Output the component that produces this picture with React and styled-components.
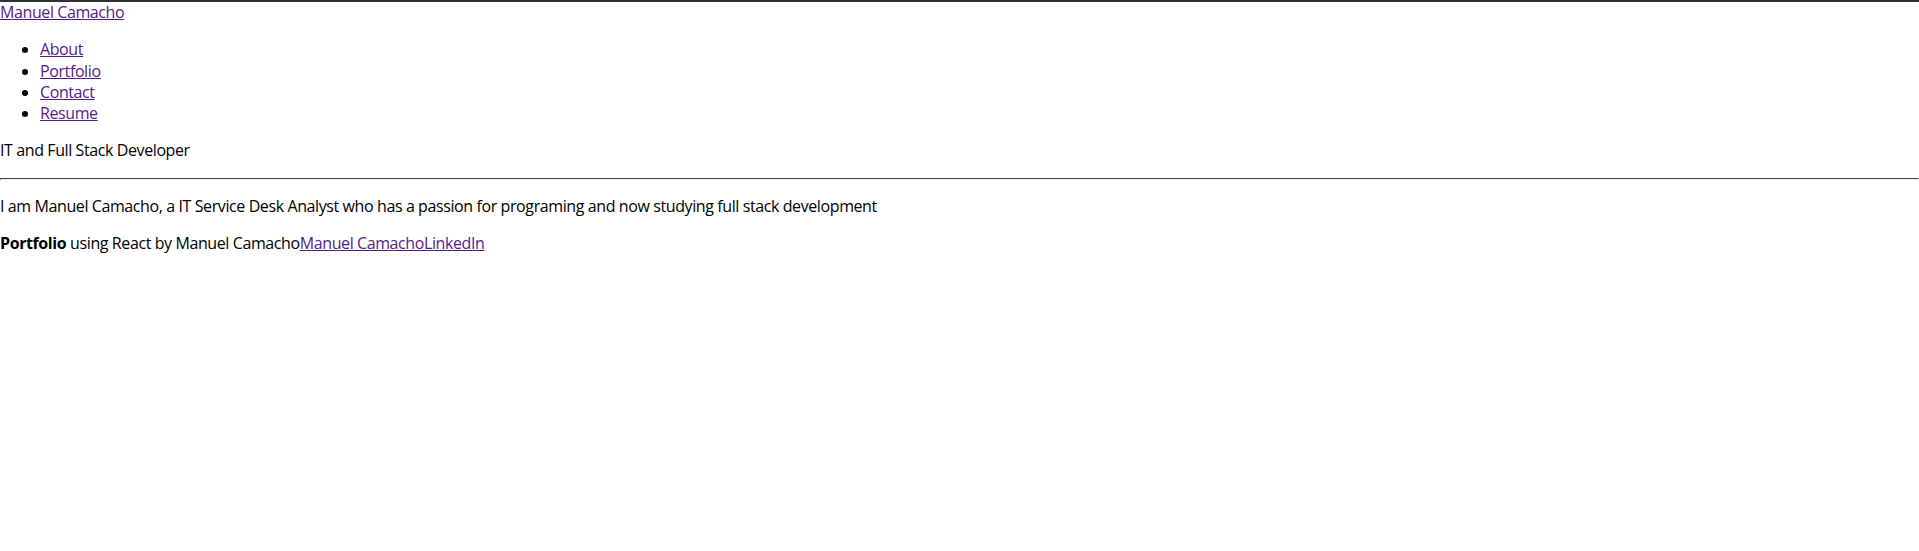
import React from 'react';
import styled, { createGlobalStyle } from 'styled-components';

const GlobalStyle = createGlobalStyle`
  html, body {
    margin: 0;
    padding: 0;
    background: #ffffff;
  }
  body {
    border-top: 2px solid #2f3038;
    font-family: "Open Sans", "Noto Sans", sans-serif;
    font-size: 16px;
    line-height: 1.33;
    letter-spacing: -0.4px;
    color: #000000;
  }
`;

const Header = styled.header`
  display: block;
`;

const Brand = styled.a`
  color: #551a8b;
  text-decoration: underline;
`;

const NavList = styled.ul`
  margin: 16px 0;
  padding-left: 40px;
  list-style: disc;
`;

const NavItem = styled.li`
  display: list-item;
`;

const NavLink = styled.a`
  color: #551a8b;
  text-decoration: underline;
`;

const Tagline = styled.p`
  margin: 16px 0;
`;

const Divider = styled.hr`
  margin: 8px 0;
  border: 1px inset #eeeeee;
  border-top-color: #9a9a9a;
  border-left-color: #9a9a9a;
`;

const Text = styled.p`
  margin: 16px 0;
`;

const FooterText = styled.p`
  margin: 16px 0;
`;

const FooterLink = styled.a`
  color: #551a8b;
  text-decoration: underline;
`;

const navItems = ['About', 'Portfolio', 'Contact', 'Resume'];

const App = () => {
  return (
    <>
      <GlobalStyle />
      <Header>
        <Brand href="#">Manuel Camacho</Brand>
        <NavList>
          {navItems.map((item) => (
            <NavItem key={item}>
              <NavLink href={`#${item.toLowerCase()}`}>{item}</NavLink>
            </NavItem>
          ))}
        </NavList>
        <Tagline>IT and Full Stack Developer</Tagline>
      </Header>
      <Divider />
      <main>
        <Text>
          I am Manuel Camacho, a IT Service Desk Analyst who has a passion for programing and now studying full
          stack development
        </Text>
      </main>
      <footer>
        <FooterText>
          <strong>Portfolio</strong> using React by Manuel Camacho
          <FooterLink href="#">Manuel Camacho</FooterLink>
          <FooterLink href="#">LinkedIn</FooterLink>
        </FooterText>
      </footer>
    </>
  );
};

export default App;
